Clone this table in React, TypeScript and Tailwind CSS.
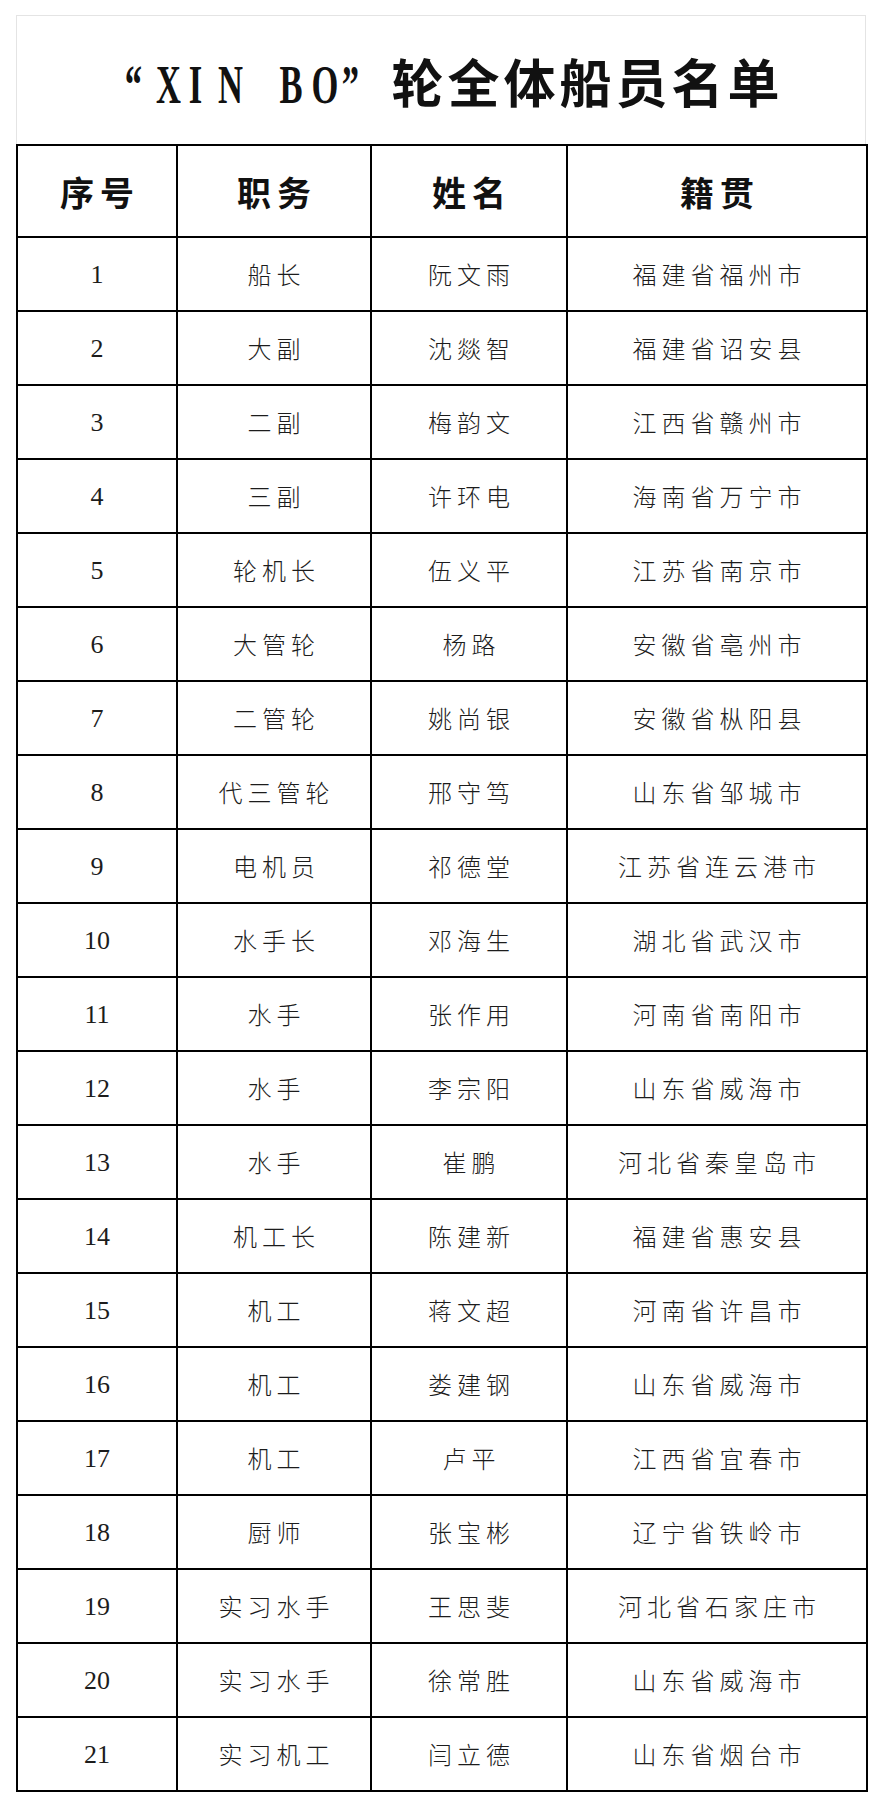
import React from "react";

type Crew = [string, string, string];

const crew: Crew[] = [
    ["船长", "阮文雨", "福建省福州市"],
    ["大副", "沈燚智", "福建省诏安县"],
    ["二副", "梅韵文", "江西省赣州市"],
    ["三副", "许环电", "海南省万宁市"],
    ["轮机长", "伍义平", "江苏省南京市"],
    ["大管轮", "杨路", "安徽省亳州市"],
    ["二管轮", "姚尚银", "安徽省枞阳县"],
    ["代三管轮", "邢守笃", "山东省邹城市"],
    ["电机员", "祁德堂", "江苏省连云港市"],
    ["水手长", "邓海生", "湖北省武汉市"],
    ["水手", "张作用", "河南省南阳市"],
    ["水手", "李宗阳", "山东省威海市"],
    ["水手", "崔鹏", "河北省秦皇岛市"],
    ["机工长", "陈建新", "福建省惠安县"],
    ["机工", "蒋文超", "河南省许昌市"],
    ["机工", "娄建钢", "山东省威海市"],
    ["机工", "卢平", "江西省宜春市"],
    ["厨师", "张宝彬", "辽宁省铁岭市"],
    ["实习水手", "王思斐", "河北省石家庄市"],
    ["实习水手", "徐常胜", "山东省威海市"],
    ["实习机工", "闫立德", "山东省烟台市"],
];

const headers = ["序号", "职务", "姓名", "籍贯"];

// the ship name is set in a narrow fixed-pitch serif, so each letter gets its own slot
const shipName = "“XIN BO”".split("");

export default function App() {
    return (
        <div className="w-[882px] min-h-[1806px] bg-white pt-[15px] px-[16px] font-['Noto_Sans_CJK_SC',sans-serif]">
            {/* title block */}
            <div className="h-[129px] border-t border-x border-[#e4e4e4] flex items-center justify-center pl-[20px] pt-[6px]">
                <h1 className="flex items-baseline leading-none text-[#111]">
                    <span className="flex font-['Liberation_Serif',serif] text-[54px] font-bold">
                        {shipName.map((ch, i) => (
                            <span key={i} className="inline-block w-[31px] text-center">
                                <span className="inline-block scale-x-[0.64]">{ch === " " ? "\u00a0" : ch}</span>
                            </span>
                        ))}
                    </span>
                    <span className="ml-[25px] text-[52px] font-bold tracking-[4px]">轮全体船员名单</span>
                </h1>
            </div>

            <table className="w-[850px] border-collapse table-fixed">
                <colgroup>
                    <col className="w-[160px]" />
                    <col className="w-[194px]" />
                    <col className="w-[196px]" />
                    <col className="w-[300px]" />
                </colgroup>
                <thead>
                    <tr className="h-[92px]">
                        {headers.map((h) => (
                            <th
                                key={h}
                                className="border-2 border-black text-center align-middle text-[34px] font-bold text-[#111] tracking-[6px] pl-[6px]"
                            >
                                {h}
                            </th>
                        ))}
                    </tr>
                </thead>
                <tbody>
                    {crew.map(([role, name, origin], i) => (
                        <tr key={i} className="h-[74px]">
                            <td className="border-2 border-black text-center align-middle text-[26px] text-[#1c1c1c] font-['Liberation_Serif',serif]">
                                {i + 1}
                            </td>
                            <td className="border-2 border-black text-center align-middle text-[24px] text-[#1c1c1c] font-light tracking-[5px] pl-[5px]">
                                {role}
                            </td>
                            <td className="border-2 border-black text-center align-middle text-[24px] text-[#1c1c1c] font-light tracking-[5px] pl-[5px]">
                                {name}
                            </td>
                            <td className="border-2 border-black text-center align-middle text-[24px] text-[#1c1c1c] font-light tracking-[5px] pl-[5px]">
                                {origin}
                            </td>
                        </tr>
                    ))}
                </tbody>
            </table>
        </div>
    );
}
